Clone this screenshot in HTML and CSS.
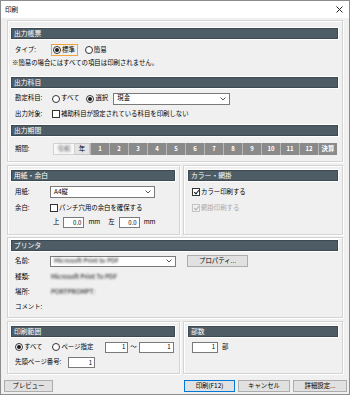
FILE: index.html
```html
<!DOCTYPE html>
<html lang="ja">
<head>
  <meta charset="UTF-8" />
  <title>印刷</title>
  <link rel="stylesheet" href="styles.css">
</head>
<body>
<div class="window">
  <div class="titlebar">
    <span class="title">印刷</span>
    <svg class="close" width="7" height="7" viewBox="0 0 7 7"><path d="M0.5 0.5L6.5 6.5M6.5 0.5L0.5 6.5" stroke="#222" stroke-width="1"/></svg>
  </div>

  <div class="content">
    <!-- output settings -->
    <section class="group g-main">
      <div class="bar">出力帳票</div>
      <div class="row r-type">
        <span class="label">タイプ:</span>
        <span class="focus"><span class="radio on"></span>標準</span>
        <span class="opt"><span class="radio"></span>簡易</span>
      </div>
      <div class="row r-note">※簡易の場合にはすべての項目は印刷されません。</div>

      <div class="bar bar-gap">出力科目</div>
      <div class="row r-acct">
        <span class="label">勘定科目:</span>
        <span class="opt"><span class="radio"></span>すべて</span>
        <span class="opt"><span class="radio on"></span>選択</span>
        <span class="select s-acct">現金<svg width="6" height="4" viewBox="0 0 6 4"><path d="M0.5 0.5L3 3L5.5 0.5" fill="none" stroke="#555"/></svg></span>
      </div>
      <div class="row r-target">
        <span class="label">出力対象:</span>
        <span class="opt"><span class="check"></span>補助科目が設定されている科目を印刷しない</span>
      </div>

      <div class="bar bar-gap2">出力期間</div>
      <div class="row r-period">
        <span class="label">期間:</span>
        <div class="period">
          <span class="era"><span class="blur">令和</span></span>
          <span class="yr">年</span>
          <span class="mon">1</span><span class="mon">2</span><span class="mon">3</span><span class="mon">4</span>
          <span class="mon">5</span><span class="mon">6</span><span class="mon">7</span><span class="mon">8</span>
          <span class="mon">9</span><span class="mon">10</span><span class="mon">11</span><span class="mon">12</span>
          <span class="mon">決算</span>
        </div>
      </div>
    </section>

    <div class="pair pair-paper">
      <section class="group g-paper">
        <div class="bar">用紙・余白</div>
        <div class="row r-16 first">
          <span class="label l-short">用紙:</span>
          <span class="select s-paper">A4縦<svg width="6" height="4" viewBox="0 0 6 4"><path d="M0.5 0.5L3 3L5.5 0.5" fill="none" stroke="#555"/></svg></span>
        </div>
        <div class="row r-16">
          <span class="label l-short">余白:</span>
          <span class="opt"><span class="check"></span>パンチ穴用の余白を確保する</span>
        </div>
        <div class="row r-offset">
          <span class="side">上</span><span class="num n-mm">0.0</span><span class="unit">mm</span>
          <span class="side side-l">左</span><span class="num n-mm">0.0</span><span class="unit">mm</span>
        </div>
      </section>
      <section class="group g-color">
        <div class="bar">カラー・網掛</div>
        <div class="row r-16 first">
          <span class="opt"><span class="check on"></span>カラー印刷する</span>
        </div>
        <div class="row r-16">
          <span class="opt disabled"><span class="check on"></span>網掛印刷する</span>
        </div>
      </section>
    </div>

    <section class="group g-printer">
      <div class="bar">プリンタ</div>
      <div class="row r-16 first">
        <span class="label l-short2">名前:</span>
        <span class="select s-printer"><span class="blur dim">Microsoft Print to PDF</span><svg width="6" height="4" viewBox="0 0 6 4"><path d="M0.5 0.5L3 3L5.5 0.5" fill="none" stroke="#555"/></svg></span>
        <span class="btn b-prop">プロパティ...</span>
      </div>
      <div class="row r-16">
        <span class="label l-short2">種類:</span>
        <span class="blur dim">Microsoft Print To PDF</span>
      </div>
      <div class="row r-15">
        <span class="label l-short2">場所:</span>
        <span class="blur dim">PORTPROMPT:</span>
      </div>
      <div class="row r-14">
        <span class="label l-short2">コメント:</span>
      </div>
    </section>

    <div class="pair pair-range">
      <section class="group g-range">
        <div class="bar">印刷範囲</div>
        <div class="row r-16 first">
          <span class="opt o-all"><span class="radio on"></span>すべて</span>
          <span class="opt o-page"><span class="radio"></span>ページ指定</span>
          <span class="num n-from">1</span>
          <span class="tilde">～</span>
          <span class="num n-to">1</span>
        </div>
        <div class="row r-15">
          <span class="label l-first">先頭ページ番号:</span>
          <span class="num n-first">1</span>
        </div>
      </section>
      <section class="group g-copies">
        <div class="bar">部数</div>
        <div class="row r-16 first">
          <span class="num n-copies">1</span>
          <span class="unit">部</span>
        </div>
      </section>
    </div>

    <div class="buttons">
      <span class="btn b-preview">プレビュー</span>
      <span class="spacer"></span>
      <span class="btn b-print">印刷(F12)</span>
      <span class="btn b-cancel">キャンセル</span>
      <span class="btn b-detail">詳細設定...</span>
    </div>
  </div>
</div>
</body>
</html>
```

FILE: styles.css
```css
* {
  box-sizing: border-box;
}
body {
  margin: 0;
  font-family: "Noto Sans CJK JP", "Noto Sans", sans-serif;
  font-size: 6.4px;
  line-height: 1;
  color: #000;
  background: #fff;
}
.window {
  width: 350px;
  height: 395px;
  border: 1px solid #8c8c8c;
  background: #f0f0f0;
  overflow: hidden;
}
.titlebar {
  height: 17px;
  background: #fff;
  display: flex;
  align-items: center;
  justify-content: space-between;
  padding: 0 6px 0 4px;
  font-size: 6.6px;
}
.content {
  padding: 2px 6px 0;
}

/* group boxes */
.group {
  border: 1px solid #d4d4d4;
  box-shadow: inset 1px 1px 0 #fff, 1px 1px 0 #fff;
  padding: 4px 4px 5px 3px;
}
.g-main {
  padding-top: 7px;
  padding-bottom: 4px;
}
.g-color {
  padding-left: 4px;
}
.g-printer {
  margin-top: 2px;
  padding-top: 2px;
  padding-bottom: 3px;
}
.g-range, .g-copies {
  padding-bottom: 3px;
}
.g-copies {
  padding-left: 4px;
}
.pair {
  display: grid;
  grid-template-columns: 173px 160px;
  gap: 3px;
  margin-top: 3px;
}
.bar {
  height: 11px;
  background: #4e5d65;
  color: #fff;
  border: 1px solid #3d4a51;
  box-shadow: 0 0 0 1px #fff;
  display: flex;
  align-items: center;
  padding-left: 2px;
  font-size: 6.8px;
}
.bar-gap {
  margin-top: 9px;
}
.bar-gap2 {
  margin-top: 3px;
}

/* rows */
.row {
  display: flex;
  align-items: center;
  padding-left: 4px;
  white-space: nowrap;
}
.label {
  width: 37px;
  flex: none;
}
.l-short {
  width: 35px;
}
.l-short2 {
  width: 36px;
}
.l-first {
  width: 53px;
}
.r-type {
  margin-top: 3px;
  height: 16px;
}
.r-note {
  height: 10px;
  padding-left: 1px;
}
.r-acct {
  margin-top: 3px;
  height: 15px;
}
.r-target {
  height: 16px;
}
.r-period {
  margin-top: 5px;
  height: 16px;
}
.r-16 {
  height: 16px;
}
.r-15 {
  height: 15px;
}
.r-14 {
  height: 14px;
}
.first {
  margin-top: 3px;
}
.g-printer .first, .g-range .first, .g-copies .first {
  margin-top: 2px;
}
.r-offset {
  height: 13px;
  padding-left: 42px;
}

/* radio / checkbox */
.opt {
  display: inline-flex;
  align-items: center;
  margin-right: 7px;
}
.focus {
  display: inline-flex;
  align-items: center;
  height: 12px;
  padding: 0 2px 0 1px;
  margin-left: -1px;
  margin-right: 7px;
  border: 1px solid #f2a33a;
}
.radio {
  width: 8px;
  height: 8px;
  border: 1px solid #333;
  border-radius: 50%;
  background: #fff;
  margin-right: 1px;
  display: inline-flex;
  align-items: center;
  justify-content: center;
  flex: none;
}
.radio.on::after {
  content: "";
  width: 4px;
  height: 4px;
  border-radius: 50%;
  background: #1a1a1a;
}
.check {
  width: 8px;
  height: 8px;
  border: 1px solid #333;
  background: #fff;
  margin-right: 1px;
  position: relative;
  flex: none;
}
.check.on::after {
  content: "";
  position: absolute;
  left: 1.5px;
  top: 0px;
  width: 2px;
  height: 4px;
  border-right: 1px solid #1a1a1a;
  border-bottom: 1px solid #1a1a1a;
  transform: rotate(40deg);
}
.disabled {
  color: #a8a8a8;
}
.disabled .check {
  border-color: #c4c4c4;
  background: transparent;
}
.disabled .check.on::after {
  border-color: #b0b0b0;
}

/* select & inputs */
.select {
  height: 12px;
  background: #fff;
  border: 1px solid #7a7a7a;
  display: inline-flex;
  align-items: center;
  justify-content: space-between;
  padding: 0 3px 0 3px;
  flex: none;
}
.s-acct {
  width: 117px;
  margin-left: -2px;
}
.s-paper {
  width: 105px;
}
.s-printer {
  width: 126px;
  height: 11px;
  margin-left: -1px;
}
.num {
  height: 11px;
  background: #fff;
  border: 1px solid #7a7a7a;
  display: inline-flex;
  align-items: center;
  justify-content: flex-end;
  padding-right: 2px;
  font-size: 6px;
  flex: none;
}
.n-mm {
  width: 21px;
  margin-left: 4px;
}
.unit {
  margin-left: 4px;
}
.side-l {
  margin-left: 8px;
}
.o-all {
  margin-right: 10px;
}
.o-page {
  margin-right: 12px;
}
.n-from {
  width: 23px;
}
.tilde {
  margin: 0 2px;
}
.n-to {
  width: 35px;
}
.n-first {
  width: 27px;
}
.n-copies {
  width: 26px;
}

/* period tabs */
.period {
  display: flex;
  height: 12px;
  margin-left: 1px;
}
.era {
  width: 22px;
  background: #f8f8f8;
  border: 1px solid #d2d2d2;
  display: flex;
  align-items: center;
  justify-content: center;
  color: #505050;
}
.yr {
  width: 15px;
  background: #e4e4e4;
  border: 1px solid #c8c8c8;
  border-left: none;
  display: flex;
  align-items: center;
  justify-content: center;
}
.mon {
  width: 19px;
  background: #8a8a8a;
  color: #fff;
  font-weight: bold;
  border-left: 1px solid #b8b8b8;
  display: flex;
  align-items: center;
  justify-content: center;
  font-size: 6px;
}
.mon:last-child {
  font-size: 6.4px;
}

.blur {
  filter: blur(1px);
}
.dim {
  color: #000;
}

/* buttons */
.btn {
  height: 12px;
  background: #e1e1e1;
  border: 1px solid #adadad;
  display: inline-flex;
  align-items: center;
  justify-content: center;
  flex: none;
}
.b-prop {
  width: 61px;
  margin-left: 11px;
}
.buttons {
  display: flex;
  gap: 3px;
  margin: 6px -4px 0 -3px;
}
.spacer {
  flex: 1;
}
.b-preview {
  width: 49px;
}
.b-print {
  width: 51px;
  border-color: #0078d7;
}
.b-cancel {
  width: 52px;
}
.b-detail {
  width: 54px;
}
```
